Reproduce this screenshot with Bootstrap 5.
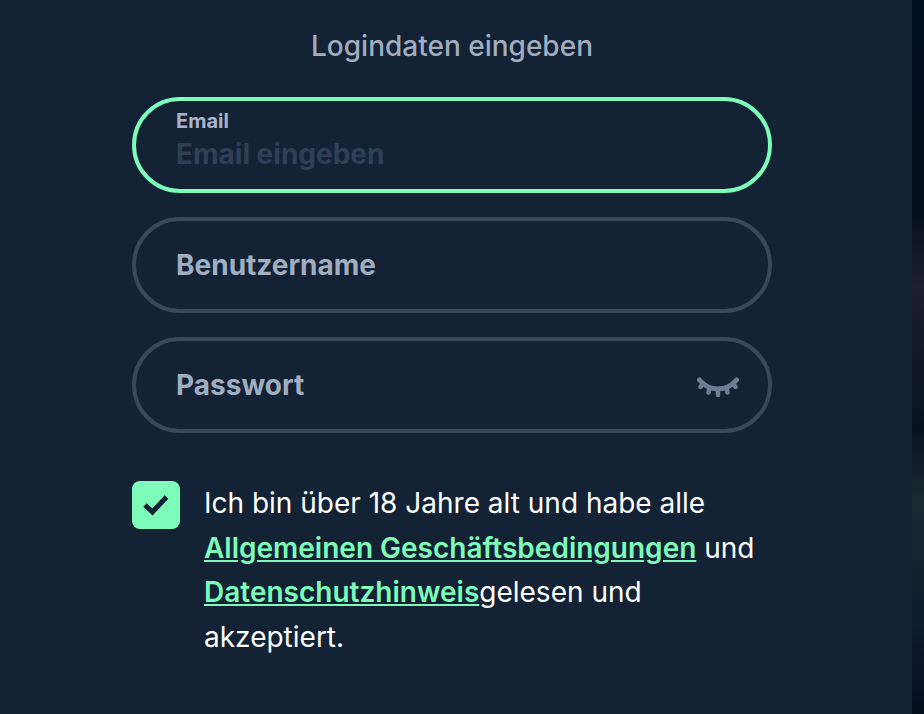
<!doctype html>
<html lang="de">
<head>
<meta charset="utf-8">
<title>Login</title>
<link href="https://cdn.jsdelivr.net/npm/bootstrap@5.3.0/dist/css/bootstrap.min.css" rel="stylesheet">
<style>
html,body{height:714px;overflow:hidden}
body{background:#03101f;font-family:Inter,"Liberation Sans",sans-serif}
.edge-strip{width:12px;background:linear-gradient(180deg,#03101f 0%,#07101f 30%,#1a2030 40%,#08121f 60%,#1b2a33 70%,#111e2d 85%,#040f1e 100%)}
.panel{width:912px;height:714px;background:#132235;padding:0 140px 0 132px}
.form-title{width:640px;margin:27px 0 0;height:38px;line-height:38px;font-size:28px;font-weight:500;color:#a0aec0;text-align:center}
.pill{width:640px;height:96px;border:4px solid #3b485c;border-radius:48px;padding:0 28px 0 40px;margin-top:24px}
.pill.first{margin-top:32px;border-color:#7dfcb9}
.pill-label{font-size:28px;font-weight:700;color:#a0aec0;line-height:32px}
.mini-label{display:block;font-size:20px;font-weight:700;color:#a9b4ca;line-height:22px;margin:-7px 0 3px}
.mail-input{display:block;width:100%;background:transparent;border:0;outline:0;padding:0;font-size:28px;font-weight:700;line-height:38px;height:38px;color:#fff}
.mail-input::placeholder{color:#303f58;opacity:1}
.terms{margin-top:48px;gap:24px;width:640px}
.tick{flex:0 0 48px;width:48px;height:48px;border-radius:8px;background:#7dfcb9}
.terms-text{font-size:28px;line-height:44.8px;color:#fff;margin-top:-.3px}
.terms-text a{color:#7dfcb9;font-weight:600;text-decoration:underline}
</style>
</head>
<body class="d-flex">
<main class="panel flex-shrink-0">
  <h1 class="form-title">Logindaten eingeben</h1>
  <form>
    <div class="pill first d-flex flex-column justify-content-center">
      <label class="mini-label" for="mail">Email</label>
      <input class="mail-input" id="mail" type="text" placeholder="Email eingeben">
    </div>
    <div class="pill d-flex align-items-center"><span class="pill-label">Benutzername</span></div>
    <div class="pill d-flex align-items-center justify-content-between">
      <span class="pill-label">Passwort</span>
      <svg width="44" height="24" viewBox="0 -4 44 24" fill="none" stroke="#6d7d95" stroke-linecap="round">
        <path stroke-width="5" d="M3.500 3C9 9.500 15 12 22 12S35 9.500 40.500 3"/>
        <path stroke-width="4.500" d="M6.500 7L4.500 10M37.500 7L39.500 10M13.500 11L12.500 15.500M30.500 11L31.500 15.500M22 13V18"/>
      </svg>
    </div>
    <div class="terms d-flex align-items-start">
      <div class="tick d-flex align-items-center justify-content-center">
        <svg width="26" height="22" viewBox="0 0 26 22" fill="none" stroke="#132235" stroke-width="5"><path d="M2 11L9.500 18L23.500 3"/></svg>
      </div>
      <p class="terms-text mb-0">Ich bin über 18 Jahre alt und habe alle <a href="#">Allgemeinen Geschäftsbedingungen</a> und <a href="#">Datenschutzhinweis</a>gelesen und akzeptiert.</p>
    </div>
  </form>
</main>
<div class="edge-strip flex-shrink-0"></div>
<script src="https://cdn.jsdelivr.net/npm/bootstrap@5.3.0/dist/js/bootstrap.bundle.min.js"></script>
</body>
</html>
